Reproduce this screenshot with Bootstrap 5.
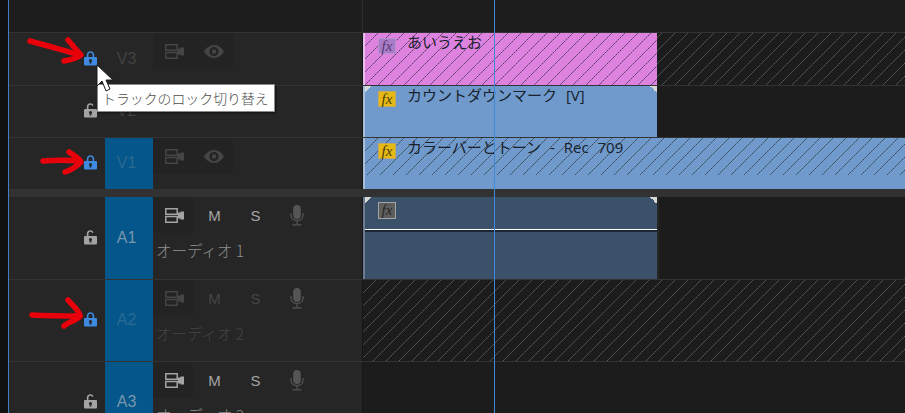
<!DOCTYPE html>
<html lang="ja">
<head>
<meta charset="utf-8">
<title>Timeline</title>
<link rel="stylesheet" href="https://cdn.jsdelivr.net/npm/bootstrap@5.3.0/dist/css/bootstrap.min.css">
<style>
html,body{margin:0;height:413px;overflow:hidden;background:#1d1d1d}
body{font-family:"Liberation Sans","Noto Sans CJK JP",sans-serif}
.stage{width:905px;height:413px;overflow:hidden;background:#0f0f0f}
.edge{width:8px;background:#101010;flex:none}
.pane{width:897px;border-left:1px solid #3f7fc4;background:#1c1c1c}
.topbar{height:32px;flex:none;background:#1d1d1d}
.topbar-left{width:354px;border-right:1px solid #2e2e2e}
.trk{flex:none;border-top:1px solid #333}
.h52{height:53px}.h51{height:52px}.h53{height:52px}
.h82{height:82px;flex:none}
.hd{width:354px;flex:none;background:#262626;border-right:1px solid #151515}
.lock-zone{width:96px;flex:none;padding-right:8px;padding-bottom:3px}
.tile{width:48px;flex:none;color:#424242;font-size:16px;line-height:18px;padding-bottom:1px;padding-right:5px}
.tile-on{background:#05568a;color:#7696ad}
.tile-lock{background:#05568a;color:#2a6a93}
.tools{flex:1 1 auto;min-width:0}
.tool-row{height:36px}
.tool-main{width:40px;height:36px;background:#232323;padding-left:2px}
.tool-cell{width:40px;height:36px;background:#232323;padding-left:2px}
.tool-wide{width:41px;padding-left:2px}
.lane-name{font-family:"Noto Sans CJK JP","Liberation Sans",sans-serif;font-size:15.5px;line-height:18px;margin:8px 0 0 3px;color:#8f8f8f;white-space:nowrap;font-weight:300}
.dim .lane-name{color:#444}
.tone-b{color:#a4a4a4}
.tone-d{color:#454545}
.mletter{font-size:15px;font-family:"Liberation Sans",sans-serif;line-height:1}
.lane{flex:1 1 auto;min-width:0;background:#1c1c1c;overflow:hidden}
.hatch{background-color:#1c1c1c;background-size:13px 13px;background-image:url("data:image/svg+xml,%3Csvg xmlns='http://www.w3.org/2000/svg' width='13' height='13'%3E%3Cpath d='M-1 14L14 -1' stroke='%235a5a5a' stroke-width='1' stroke-dasharray='2.4 .7' fill='none'/%3E%3C/svg%3E")}
.clip-box{width:294px;height:100%;flex:none;position:relative;border-left:2px solid #a9c0da;overflow:hidden}
.clip-full{width:100%}
.c-pink{background-color:#de82e0;border-left-color:#e6bfe8}
.c-blue{background-color:#6f9acb}
.c-audio{width:296px;background-color:#3b5069;border-left-color:#6d7d8f;border-right:2px solid #262626}
.hatch.c-pink{background-image:url("data:image/svg+xml,%3Csvg xmlns='http://www.w3.org/2000/svg' width='13' height='13'%3E%3Cpath d='M-1 14L14 -1' stroke='%23553a60' stroke-width='1' stroke-dasharray='2.4 .7' fill='none'/%3E%3C/svg%3E")}
.clip-full.hatch{background-color:#6f9acb;background-repeat:no-repeat;background-size:auto;background-image:url("data:image/svg+xml,%3Csvg xmlns='http://www.w3.org/2000/svg' width='1000' height='37'%3E%3Cdefs%3E%3Cpattern id='p' width='13' height='13' patternUnits='userSpaceOnUse'%3E%3Cpath d='M-1 14L14 -1' stroke='%233a4654' stroke-width='1' stroke-dasharray='2.4 .7' fill='none'/%3E%3C/pattern%3E%3C/defs%3E%3Crect width='1000' height='37' fill='url(%23p)'/%3E%3C/svg%3E")}
.clip-head{padding:5px 0 0 13px;gap:11px;height:24px}
.fxb{width:18px;height:16px;flex:none;font-family:"Liberation Serif",serif;font-style:italic;font-size:15px;line-height:14px;text-align:center;border:1px solid transparent}
.fx-y{background:#e6b914;border-color:#c0a860;color:#4a3b10}
.fx-p{background:#a97cc8;border-color:#b98fd0;color:#553a70}
.fx-g{height:17px;background:#5e5e5e;border-color:#a3a3a3;color:#262626}
.clip-title{font-family:"Open Sans","Noto Sans CJK JP",sans-serif;font-size:15px;line-height:18px;color:#18212c;white-space:nowrap;font-weight:400;margin-top:-5px;word-spacing:5px}
.corner{position:absolute;top:0;width:7px;height:7px}
.cl{left:0;background:linear-gradient(135deg,#d8d8d8 50%,transparent 50%)}
.cr{right:0;background:linear-gradient(225deg,#d8d8d8 50%,transparent 50%)}
.vol{position:absolute;left:0;right:0;top:32px;height:1px;background:#fff;box-shadow:0 1px 0 #18212d,0 2px 0 #1d2938}
.splitter{height:8px;flex:none;background:#323232}
.playhead{position:absolute;left:494px;top:0;bottom:0;width:1px;background:#3f8ad8}
.tipbox{position:absolute;left:97px;top:84px;width:178px;height:28px;background:#fff;border:1px solid #8a8a8a;box-shadow:1px 1px 2px rgba(0,0,0,.6);color:#4d4d4d;font-family:"Noto Sans CJK JP",sans-serif;font-size:13.9px;line-height:26px;white-space:nowrap;padding-left:4px;font-weight:300}
.over{position:absolute;left:0;top:0;pointer-events:none}
.stage-wrap{position:relative;width:905px;height:413px}
</style>
</head>
<body>
<svg width="0" height="0" class="d-block position-absolute">
<defs>
<symbol id="lk" viewBox="0 0 14 16"><path fill="currentColor" fill-rule="evenodd" d="M3 7V4.600C3 2.300 4.700.7 7 .7s4 1.600 4 3.900V7h2a1 1 0 0 1 1 .9v7.200a.9.9 0 0 1-1 .9H1a.9.9 0 0 1-1-.9V7.900A1 1 0 0 1 1 7zM4.800 7h4.400V4.600C9.200 3.200 8.300 2.400 7 2.400s-2.200.8-2.200 2.200zM7 9.200a1.600 1.600 0 0 0-.8 3L5.900 14h2.200l-.3-1.800a1.600 1.600 0 0 0-.8-3z"/></symbol>
<symbol id="ul" viewBox="0 0 14 16"><path fill="currentColor" fill-rule="evenodd" d="M3 7V4.400C3 2.100 4.600.6 6.800.6c1.600 0 2.900.8 3.500 2.200L8.800 3.600C8.400 2.800 7.700 2.300 6.800 2.300c-1.200 0-2 .8-2 2.100V7H13a1 1 0 0 1 1 .9v7.200a.9.9 0 0 1-1 .9H1a.9.9 0 0 1-1-.9V7.900A1 1 0 0 1 1 7zM7 9.200a1.600 1.600 0 0 0-.8 3L5.900 14h2.200l-.3-1.800a1.600 1.600 0 0 0-.8-3z"/></symbol>
<symbol id="sy" viewBox="0 0 19 15"><path fill="none" stroke="currentColor" stroke-width="1.500" d="M.8.800h11.400v5.400H.8zM.8 8.600h11.400v5.600H.8z"/><path fill="currentColor" d="M13 4.500h2.500V3.500H19v8h-3.500v-1H13z"/></symbol>
<symbol id="ey" viewBox="0 0 20 13"><path fill="currentColor" fill-rule="evenodd" d="M10 0c4.500 0 8 3 10 6.500C18 10 14.500 13 10 13S2 10 0 6.500C2 3 5.500 0 10 0zm0 2a4.500 4.500 0 1 0 0 9 4.500 4.500 0 0 0 0-9zm0 2.200a2.300 2.300 0 1 1 0 4.600 2.300 2.300 0 0 1 0-4.600z"/></symbol>
<symbol id="mc" viewBox="0 0 14 21"><rect x="3.200" y="0" width="7.600" height="14" rx="3.800" fill="currentColor"/><path fill="none" stroke="currentColor" stroke-width="1.200" d="M1 8v2.500c0 3 2.600 5 6 5s6-2 6-5V8M7 15.500V19M2.500 19.800h9"/></symbol>
</defs>
</svg>
<div class="stage-wrap">
<div class="stage d-flex">
<div class="edge"></div>
<div class="pane d-flex flex-column">
  <div class="topbar d-flex"><div class="topbar-left"></div></div>

  <div class="trk h52 d-flex dim">
    <div class="hd d-flex">
      <div class="lock-zone d-flex align-items-center justify-content-end"><svg width="13" height="16" style="color:#3d8ae0"><use href="#lk"/></svg></div>
      <div class="tile d-flex align-items-center justify-content-center">V3</div>
      <div class="tools">
        <div class="d-flex tool-row tone-d">
          <div class="tool-main d-flex align-items-center justify-content-center"><svg width="19" height="15"><use href="#sy"/></svg></div>
          <div class="tool-cell d-flex align-items-center justify-content-center"><svg width="20" height="13"><use href="#ey"/></svg></div>
        </div>
      </div>
    </div>
    <div class="lane hatch"><div class="clip-box c-pink hatch">
      <div class="d-flex clip-head"><div class="fxb fx-p">fx</div><div class="clip-title">あいうえお</div></div>
    </div></div>
  </div>

  <div class="trk h51 d-flex dim">
    <div class="hd d-flex">
      <div class="lock-zone d-flex align-items-center justify-content-end"><svg width="13" height="16" style="color:#a3a3a3"><use href="#ul"/></svg></div>
      <div class="tile d-flex align-items-center justify-content-center">V2</div>
      <div class="tools"></div>
    </div>
    <div class="lane"><div class="clip-box c-blue">
      <div class="corner cl"></div><div class="corner cr"></div>
      <div class="d-flex clip-head"><div class="fxb fx-y">fx</div><div class="clip-title">カウントダウンマーク [V]</div></div>
    </div></div>
  </div>

  <div class="trk h53 d-flex dim">
    <div class="hd d-flex">
      <div class="lock-zone d-flex align-items-center justify-content-end"><svg width="13" height="16" style="color:#3d8ae0"><use href="#lk"/></svg></div>
      <div class="tile tile-lock d-flex align-items-center justify-content-center">V1</div>
      <div class="tools">
        <div class="d-flex tool-row tone-d">
          <div class="tool-main d-flex align-items-center justify-content-center"><svg width="19" height="15"><use href="#sy"/></svg></div>
          <div class="tool-cell d-flex align-items-center justify-content-center"><svg width="20" height="13"><use href="#ey"/></svg></div>
        </div>
      </div>
    </div>
    <div class="lane"><div class="clip-box clip-full c-blue hatch">
      <div class="d-flex clip-head"><div class="fxb fx-y">fx</div><div class="clip-title">カラーバーとトーン - Rec 709</div></div>
    </div></div>
  </div>

  <div class="splitter"></div>

  <div class="h82 d-flex">
    <div class="hd d-flex">
      <div class="lock-zone d-flex align-items-center justify-content-end"><svg width="13" height="16" style="color:#a3a3a3"><use href="#ul"/></svg></div>
      <div class="tile tile-on d-flex align-items-center justify-content-center">A1</div>
      <div class="tools">
        <div class="d-flex tool-row tone-b">
          <div class="tool-main d-flex align-items-center justify-content-center"><svg width="19" height="15"><use href="#sy"/></svg></div>
          <div class="tool-wide d-flex align-items-center justify-content-center mletter">M</div>
          <div class="tool-wide d-flex align-items-center justify-content-center mletter">S</div>
          <div class="tool-wide d-flex align-items-center justify-content-center" style="color:#555"><svg width="14" height="21"><use href="#mc"/></svg></div>
        </div>
        <div class="lane-name">オーディオ 1</div>
      </div>
    </div>
    <div class="lane"><div class="clip-box c-audio">
      <div class="corner cl"></div><div class="corner cr"></div>
      <div class="d-flex clip-head"><div class="fxb fx-g">fx</div></div>
      <div class="vol"></div>
    </div></div>
  </div>

  <div class="trk h82 d-flex dim">
    <div class="hd d-flex">
      <div class="lock-zone d-flex align-items-center justify-content-end"><svg width="13" height="16" style="color:#3d8ae0"><use href="#lk"/></svg></div>
      <div class="tile tile-lock d-flex align-items-center justify-content-center">A2</div>
      <div class="tools">
        <div class="d-flex tool-row tone-d">
          <div class="tool-main d-flex align-items-center justify-content-center"><svg width="19" height="15"><use href="#sy"/></svg></div>
          <div class="tool-wide d-flex align-items-center justify-content-center mletter">M</div>
          <div class="tool-wide d-flex align-items-center justify-content-center mletter">S</div>
          <div class="tool-wide d-flex align-items-center justify-content-center" style="color:#555"><svg width="14" height="21"><use href="#mc"/></svg></div>
        </div>
        <div class="lane-name">オーディオ 2</div>
      </div>
    </div>
    <div class="lane hatch"></div>
  </div>

  <div class="trk h82 d-flex">
    <div class="hd d-flex">
      <div class="lock-zone d-flex align-items-center justify-content-end"><svg width="13" height="16" style="color:#a3a3a3"><use href="#ul"/></svg></div>
      <div class="tile tile-on d-flex align-items-center justify-content-center">A3</div>
      <div class="tools">
        <div class="d-flex tool-row tone-b">
          <div class="tool-main d-flex align-items-center justify-content-center"><svg width="19" height="15"><use href="#sy"/></svg></div>
          <div class="tool-wide d-flex align-items-center justify-content-center mletter">M</div>
          <div class="tool-wide d-flex align-items-center justify-content-center mletter">S</div>
          <div class="tool-wide d-flex align-items-center justify-content-center" style="color:#555"><svg width="14" height="21"><use href="#mc"/></svg></div>
        </div>
        <div class="lane-name">オーディオ 3</div>
      </div>
    </div>
    <div class="lane"></div>
  </div>
</div>
</div>
<div class="playhead"></div>
<div class="tipbox">トラックのロック切り替え</div>
<svg class="over" width="905" height="413" viewBox="0 0 905 413">
  <g fill="none" stroke="#e8000a" stroke-width="5.500" stroke-linecap="round" stroke-linejoin="round">
    <path d="M30 41C45 45 62 50 80 55"/><path d="M68 40C74 47 78 52 81 55C76 59 70 60 64 61"/>
    <path d="M43 161C55 160 68 160 80 161"/><path d="M69 152C73 155 79 158 81 162C76 167 71 170 65 172"/>
    <path d="M32 315C50 316 65 316 80 316"/><path d="M68 300C72 305 79 310 80 316C76 321 68 322 64 326"/>
  </g>
  <path d="M97 65V86L102 81L106 91L110 89L106 80H113Z" fill="#fff" stroke="#1a1a1a" stroke-width="1"/>
</svg>
</div>
</body>
</html>
